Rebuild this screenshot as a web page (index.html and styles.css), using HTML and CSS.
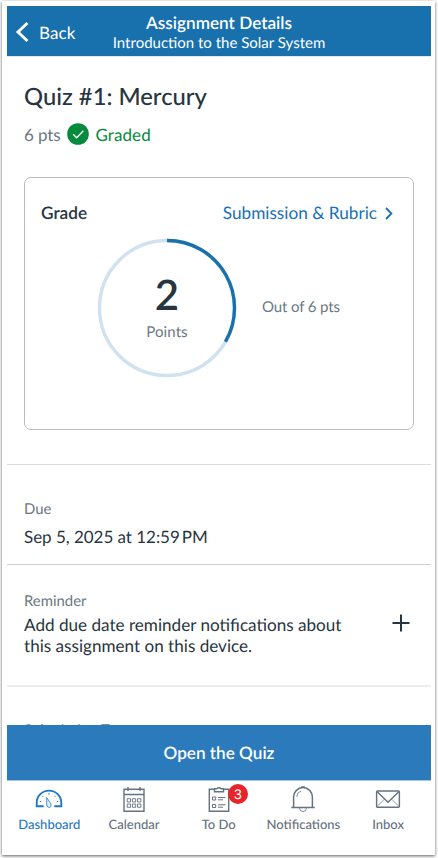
FILE: index.html
```html
<!DOCTYPE html>
<html lang="en">
<head>
<meta charset="utf-8">
<title>Assignment Details</title>
<link rel="stylesheet" href="styles.css">
</head>
<body>
<div class="frame">
  <header class="bar">
    <a class="back"><svg width="14" height="22" viewBox="0 0 14 22"><path d="M12.4 2L3 11l9.4 9" fill="none" stroke="currentColor" stroke-width="2.9"/></svg><span>Back</span></a>
    <div class="heading">
      <div class="heading-title"><span>Assignment Details</span></div>
      <div class="heading-sub"><span>Introduction to the Solar System</span></div>
    </div>
  </header>
  <main class="content">
    <section class="summary">
      <h1><span>Quiz #1: Mercury</span></h1>
      <div class="status">
        <span class="pts">6 pts</span>
        <svg width="22" height="22" viewBox="0 0 22 22"><circle cx="11" cy="11" r="10.8" fill="#048a3b"/><path d="M6.2 11.3l3.4 3.4 6.8-7" fill="none" stroke="#fff" stroke-width="1.4"/></svg>
        <span class="graded">Graded</span>
      </div>
      <div class="card">
        <div class="card-head">
          <span class="grade">Grade</span>
          <a class="rubric"><span>Submission &amp; Rubric</span><svg width="8" height="13" viewBox="0 0 8 13"><path d="M1 1l5.4 5.5L1 12" fill="none" stroke="currentColor" stroke-width="1.8"/></svg></a>
        </div>
        <div class="score-row">
          <div class="ring">
            <svg class="ring-art" width="140" height="140" viewBox="0 0 140 140"><g fill="none" stroke-width="3.4"><circle cx="70" cy="70" r="67.5" stroke="#d0e2ef"/><path d="M70 2.5A67.5 67.5 0 0 1 128.46 103.75" stroke="#1870ad"/></g></svg>
            <div class="score">2</div>
            <div class="score-label"><span>Points</span></div>
          </div>
          <div class="out-of"><span>Out of 6 pts</span></div>
        </div>
      </div>
    </section>
    <section class="due">
      <div class="label"><span>Due</span></div>
      <div class="value"><span>Sep 5, 2025 at 12:59<span class="thin"></span>PM</span></div>
    </section>
    <section class="reminder">
      <div>
        <div class="label"><span>Reminder</span></div>
        <div class="note">Add due date reminder notifications about<br>this assignment on this device.</div>
      </div>
      <svg class="plus" width="18" height="18" viewBox="0 0 18 18"><path d="M9 .5v17M.5 9h17" stroke="#273540" stroke-width="2"/></svg>
    </section>
    <section class="types"><div class="label"><span>Submission Types</span></div></section>
  </main>
  <button class="open"><span>Open the Quiz</span></button>
  <nav class="tabs">
    <a class="tab active">
      <svg width="28" height="28" viewBox="0 0 28 28"><path d="M8.7 21.2H1.7v-3.3a12.3 12.3 0 0 1 24.6 0v3.3h-7" fill="none" stroke="currentColor" stroke-width="1.9"/><path d="M11.7 12.6l4.2 6.3q1 3-1.3 3.6-2.7 0-2.9-2.6z" fill="#e4f0fa" stroke="currentColor" stroke-width=".8"/><path d="M14 8v1.6M7.2 10.8l1 1M20.8 10.8l-1 1M4.8 16.3l1.4.4M23.2 16.3l-1.4.4" stroke="currentColor" stroke-width="1"/></svg>
      <span>Dashboard</span>
    </a>
    <a class="tab">
      <svg width="28" height="28" viewBox="0 0 28 28"><g fill="none" stroke="currentColor"><path d="M4 4.2h20v22H4zM4 9.5h20M8 2v4M20 2v4" stroke-width="1.4"/><path d="M7.2 13.7h3.3v3.3H7.2zM12.4 13.7h3.3v3.3h-3.3zM17.6 13.7h3.3v3.3h-3.3zM7.2 19h3.3v3.3H7.2zM12.4 19h3.3v3.3h-3.3zM17.6 19h3.3v3.3h-3.3z" stroke-width=".9"/></g></svg>
      <span>Calendar</span>
    </a>
    <a class="tab">
      <svg width="28" height="28" viewBox="0 0 28 28"><g fill="none" stroke="currentColor"><path d="M9.5 4.3H4.3v22h19.4v-22h-5.2M9.5 6.7v-3h2.2q2.3-2 4.6 0h2.2v3z" stroke-width="1.4"/><path d="M7.5 12h3.2v3H7.5zM7.5 19.5h3.2v3H7.5zM13 12.5h7.5M13 14.8h5M13 19.8h7.5M13 22.2h5" stroke-width="1"/></g></svg>
      <span class="badge">3</span>
      <span>To Do</span>
    </a>
    <a class="tab">
      <svg width="28" height="28" viewBox="0 0 28 28"><g fill="none" stroke="currentColor"><path d="M2.3 22.4h23.4M4.6 22V12a9.4 9.4 0 0 1 18.8 0v10" stroke-width="1.5"/><path d="M12.5 2.6V1.5h3v1.1M10.5 22.8q0 3.8 3.5 3.8t3.5-3.8M7.7 12q.3-5 4.6-6" stroke-width=".8"/></g></svg>
      <span>Notifications</span>
    </a>
    <a class="tab">
      <svg width="28" height="28" viewBox="0 0 28 28"><g fill="none" stroke="currentColor"><rect x="2.6" y="6" width="22.8" height="16.2" rx="1" stroke-width="1.4"/><path d="M3 6.5l11 10.8L25 6.5" stroke-width="1.4"/><path d="M3 21.5l7-7M25 21.5l-7-7" stroke-width=".7"/></g></svg>
      <span>Inbox</span>
    </a>
  </nav>
</div>
</body>
</html>
```
FILE: styles.css
```css
* { box-sizing: border-box; }
html { height: 858px; overflow: hidden; background: #fff; }
body { margin: 0; width: 438px; height: 858px; padding: 1px 3px 3px 2px; overflow: hidden; font-family: Lato, "Liberation Sans", sans-serif; font-size: 17px; color: #273540; text-rendering: geometricPrecision; }
svg { display: block; flex: none; }
.frame { width: 433px; height: 854px; padding: 5px 4px 0 5px; background: #fff; box-shadow: 0 1px 3px rgba(0,0,0,.65); }
.bar { display: grid; grid-template-columns: 84px 256px 84px; height: 50px; background: #1870ad; color: #fff; white-space: nowrap; }
.back { display: flex; align-items: center; gap: 10px; padding: 2px 0 0 8px; letter-spacing: .1px; }
.heading { text-align: center; padding-top: 6px; }
.heading-title { line-height: 21px; font-size: 17.2px; font-weight: 600; }
.heading-sub { line-height: 21px; font-size: 15px; }
.content { height: 669px; overflow: hidden; border-top: 1px solid #e3e8eb; white-space: nowrap; }
.summary { height: 408px; padding: 24px 17px 0; border-bottom: 1px solid #d7dce1; }
h1 { margin: 0; font-size: 23.8px; line-height: 32px; font-weight: 500; }
.status { display: flex; align-items: center; height: 22px; margin-top: 10px; gap: 6.4px; color: #6a7883; }
.pts { letter-spacing: -.1px; }
.graded { color: #048a3b; letter-spacing: .1px; }
.card { height: 253px; margin-top: 32px; border: 1px solid #b8bcc0; border-radius: 7px; padding: 24px 20px 0 16px; }
.card-head { display: flex; justify-content: space-between; line-height: 22px; }
.grade { font-weight: 600; font-size: 17.2px; }
.rubric { display: flex; align-items: center; gap: 8px; color: #1770b8; font-size: 17.2px; }
.score-row { display: flex; margin: 14px 0 0 56px; gap: 25px; font-size: 15px; color: #6a7883; }
.ring { width: 140px; height: 140px; display: grid; justify-items: center; grid-template-rows: 31px 50px 26px; }
.ring > * { grid-column: 1; }
.ring-art { grid-row: 1 / 4; }
.score { grid-row: 2; font-size: 42px; line-height: 50px; font-weight: 600; color: #273540; }
.score-label { grid-row: 3; line-height: 26px; letter-spacing: .1px; }
.out-of { line-height: 140px; margin-top: -1px; letter-spacing: -.12px; }
.label { font-size: 14.9px; line-height: 20px; color: #6a7883; }
.due { height: 100px; padding: 34px 17px 0; border-bottom: 1px solid #c9ced5; }
.value { line-height: 22px; margin-top: 7px; letter-spacing: -.03px; }
.thin { display: inline-block; width: 2px; }
.reminder { display: flex; justify-content: space-between; height: 122px; padding: 26px 21px 0 17px; border-bottom: 2px solid #ebedee; }
.note { line-height: 21px; margin-top: 3px; font-size: 17.12px; }
.plus { margin-top: 23px; }
.types { padding: 33px 17px 0; }
.open { display: block; width: 100%; height: 56px; padding: 0; border: 0; border-bottom: 1px solid #a5c4de; background: #2b7abc; color: #fff; font: 600 17.15px/56px Lato, sans-serif; text-rendering: inherit; }
.tabs { display: grid; grid-template-columns: repeat(5, 84.7px); }
.tab { position: relative; display: flex; flex-direction: column; align-items: center; padding-top: 4px; font-size: 13px; line-height: 18px; color: #647281; font-weight: 500; white-space: nowrap; }
.tab svg { margin-bottom: 2px; }
.active { color: #1f78c4; }
.badge { position: absolute; left: 51.5px; top: 2.5px; width: 20px; height: 20px; border-radius: 50%; background: #e62429; color: #fff; text-align: center; font: 14px/20px "Liberation Sans", sans-serif; }
```
